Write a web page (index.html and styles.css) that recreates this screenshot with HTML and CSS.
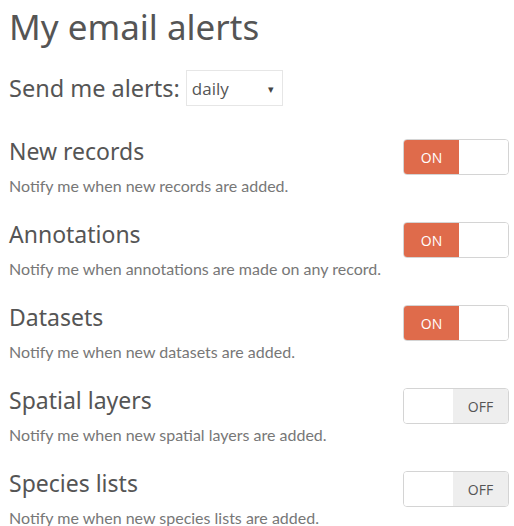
FILE: index.html
```html
<!DOCTYPE html>
<html lang="en">
<head>
    <meta charset="UTF-8">
    <title>My email alerts</title>
    <link rel="stylesheet" href="styles.css">
</head>
<body>
    <div class="container">
        <h1>My email alerts</h1>

        <div class="frequency">
            <label for="freq">Send me alerts:</label>
            <div class="select">
                <span>daily</span>
                <span class="caret">&#9662;</span>
            </div>
        </div>

        <div class="alert">
            <div class="info">
                <h3>New records</h3>
                <p>Notify me when new records are added.</p>
            </div>
            <div class="switch on"><span class="label">ON</span><span class="knob"></span></div>
        </div>

        <div class="alert">
            <div class="info">
                <h3>Annotations</h3>
                <p>Notify me when annotations are made on any record.</p>
            </div>
            <div class="switch on"><span class="label">ON</span><span class="knob"></span></div>
        </div>

        <div class="alert">
            <div class="info">
                <h3>Datasets</h3>
                <p>Notify me when new datasets are added.</p>
            </div>
            <div class="switch on"><span class="label">ON</span><span class="knob"></span></div>
        </div>

        <div class="alert">
            <div class="info">
                <h3>Spatial layers</h3>
                <p>Notify me when new spatial layers are added.</p>
            </div>
            <div class="switch off"><span class="knob"></span><span class="label">OFF</span></div>
        </div>

        <div class="alert">
            <div class="info">
                <h3>Species lists</h3>
                <p>Notify me when new species lists are added.</p>
            </div>
            <div class="switch off"><span class="knob"></span><span class="label">OFF</span></div>
        </div>
    </div>
</body>
</html>
```

FILE: styles.css
```css
body {
    margin: 0;
    font-family: 'Noto Sans', sans-serif;
    color: #555;
    background: #fff;
}
.container {
    padding: 0 5px 0 9px;
}
h1 {
    font-size: 35px;
    font-weight: normal;
    margin: 0;
    padding-top: 2px;
    line-height: 50px;
}
.frequency {
    display: flex;
    align-items: center;
    gap: 6px;
    margin-top: 18px;
    height: 36px;
}
.frequency label {
    font-size: 23.5px;
}
.select {
    display: flex;
    justify-content: space-between;
    align-items: center;
    box-sizing: border-box;
    width: 97px;
    height: 36px;
    border: 1px solid #e6e6e6;
    padding: 0 8px 0 5px;
    font-family: 'Open Sans', sans-serif;
    font-size: 17px;
    color: #555;
}
.select .caret {
    font-size: 11px;
    color: #444;
}
.alert {
    display: flex;
    justify-content: space-between;
    align-items: flex-start;
    height: 83px;
}
.frequency + .alert {
    margin-top: 30px;
}
h3 {
    font-size: 23px;
    font-weight: normal;
    margin: 0;
    line-height: 30px;
}
.info p {
    font-family: 'Lato', sans-serif;
    font-size: 16px;
    color: #777;
    margin: 10px 0 0;
}
.switch {
    display: flex;
    box-sizing: border-box;
    width: 106px;
    height: 36px;
    border: 1px solid #d4d4d4;
    border-radius: 4px;
    overflow: hidden;
    margin-top: 3px;
    font-family: 'Open Sans', sans-serif;
    font-size: 14px;
}
.switch .label,
.switch .knob {
    display: flex;
    align-items: center;
    justify-content: center;
}
.switch .label {
    flex: 0 0 55px;
}
.switch .knob {
    flex: 1;
    background: #fff;
}
.switch.on .label {
    background: #df6b4b;
    color: #fff;
}
.switch.off .label {
    background: #eeeeee;
    color: #555;
}
```
